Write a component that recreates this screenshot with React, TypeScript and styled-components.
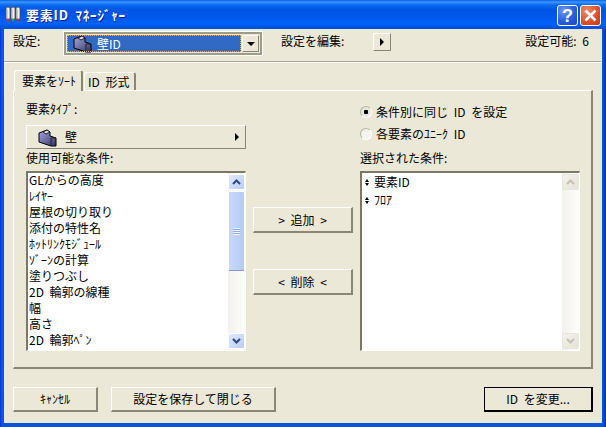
import * as React from 'react';
import styled, { createGlobalStyle } from 'styled-components';

const FACE = '#ebe8d8';
const FONT = `"Noto Sans CJK JP", "DejaVu Sans", sans-serif`;

const GlobalStyle = createGlobalStyle`
    html, body {
        margin: 0;
        padding: 0;
        background: #0a3ad0;
    }
    body {
        font-family: ${FONT};
        font-size: 12px;
        line-height: 16px;
        word-spacing: 3px;
        color: #000;
    }
`;

const Win = styled.div`
    width: 606px;
    height: 427px;
    box-sizing: border-box;
    display: flex;
    flex-direction: column;
    background: linear-gradient(90deg, #0831d9 0, #0a5be6 2px, #0855dd 4px, #0855dd 602px, #0a4ad0 604px, #0428a8 606px);
    overflow: hidden;
`;

const TitleBar = styled.div`
    height: 29px;
    flex: none;
    display: flex;
    align-items: center;
    padding: 0 5px 0 5px;
    gap: 5px;
    background: linear-gradient(180deg, #0a5fe8 0, #3d95ff 2px, #0a6af0 5px, #0054e3 10px, #0058ee 18px, #0062f8 24px, #0050d8 28px);
`;

const TitleText = styled.div`
    flex: 1;
    color: #fff;
    font-weight: 700;
    font-size: 13px;
    letter-spacing: 0.8px;
    text-shadow: 1px 1px 0 #0f1f8f;
`;

const CaptionButton = styled.div<{ $close?: boolean }>`
    width: 21px;
    height: 21px;
    box-sizing: border-box;
    margin-top: 2px;
    margin-left: -3px;
    border: 1px solid #fff;
    border-radius: 3px;
    display: flex;
    align-items: center;
    justify-content: center;
    background: ${p => p.$close
        ? 'radial-gradient(circle at 30% 25%, #ee8a6a, #e0512a 55%, #c23a14)'
        : 'radial-gradient(circle at 30% 25%, #6f97f0, #2a5fdc 55%, #1c46c0)'};
`;

const HelpMark = styled.span`
    color: #fff;
    font: 700 18px/18px "Liberation Sans", sans-serif;
`;

const Client = styled.div`
    flex: 1;
    margin: 0 4px 4px 4px;
    background: ${FACE};
    display: flex;
    flex-direction: column;
`;

const TopRow = styled.div`
    height: 33px;
    flex: none;
    box-sizing: border-box;
    margin-right: 1px;
    padding: 2px 12px 0 9px;
    display: flex;
    align-items: flex-start;
    border-bottom: 1px solid #aca899;
    box-shadow: 0 1px 0 #fff;
`;

const TopLabel = styled.div<{ $width?: number; $push?: boolean }>`
    margin-top: 2px;
    width: ${p => (p.$width ? `${p.$width}px` : 'auto')};
    margin-left: ${p => (p.$push ? 'auto' : '0')};
    white-space: nowrap;
`;

const Combo = styled.div`
    width: 200px;
    height: 25px;
    box-sizing: border-box;
    flex: none;
    margin-right: 18px;
    border: 1px solid #fff;
    box-shadow: inset 0 0 0 2px #a09c8c;
    padding: 3px;
    display: flex;
`;

const ComboValue = styled.div`
    flex: 1;
    background: #316ac5;
    outline: 1px dotted #e8b050;
    outline-offset: -1px;
    color: #fff;
    display: flex;
    align-items: center;
    gap: 5px;
    padding-left: 6px;
`;

const ComboArrow = styled.div`
    width: 17px;
    margin-left: 1px;
    background: ${FACE};
    border: 1px solid;
    border-color: #fff #8a8676 #8a8676 #fff;
    box-sizing: border-box;
    display: flex;
    align-items: center;
    justify-content: center;
`;

const Down = styled.span`
    width: 0;
    height: 0;
    border-left: 4px solid transparent;
    border-right: 4px solid transparent;
    border-top: 4px solid #000;
`;

const Right = styled.span`
    width: 0;
    height: 0;
    border-top: 4px solid transparent;
    border-bottom: 4px solid transparent;
    border-left: 4px solid #000;
`;

const SmallButton = styled.div`
    width: 18px;
    height: 18px;
    box-sizing: border-box;
    margin-top: 2px;
    border: 1px solid;
    border-color: #fff #8a8676 #8a8676 #fff;
    display: flex;
    align-items: center;
    justify-content: center;
`;

const Tabs = styled.div`
    margin: 8px 9px 0 9px;
    flex: none;
    display: flex;
    align-items: flex-end;
    height: 20px;
    position: relative;
    z-index: 1;
`;

const Tab = styled.div<{ $active?: boolean }>`
    box-sizing: border-box;
    height: ${p => (p.$active ? 21 : 18)}px;
    margin-bottom: ${p => (p.$active ? -1 : 0)}px;
    width: ${p => (p.$active ? 69 : 52)}px;
    margin-left: 1px;
    padding-left: ${p => (p.$active ? 7 : 3)}px;
    background: ${FACE};
    border: 1px solid;
    border-bottom: 0;
    border-color: #fff #8a8676 #fff #fff;
    border-right-width: 2px;
    border-radius: 3px 3px 0 0;
    line-height: ${p => (p.$active ? 19 : 17)}px;
    white-space: nowrap;
`;

const Panel = styled.div`
    margin: 0 9px 0 9px;
    height: 279px;
    flex: none;
    box-sizing: border-box;
    border: 1px solid;
    border-color: #fff #8a8676 #8a8676 #fff;
    border-bottom-width: 2px;
    border-right-width: 2px;
    padding: 10px 12px 0 12px;
    display: grid;
    grid-template-columns: 220px 100px 220px;
    column-gap: 7px;
    grid-template-rows: 48px 1fr;
`;

const Column = styled.div`
    display: flex;
    flex-direction: column;
`;

const TypeButton = styled.div`
    margin-top: 8px;
    height: 24px;
    box-sizing: border-box;
    border: 1px solid;
    border-color: #fff #8a8676 #8a8676 #fff;
    display: flex;
    align-items: center;
    padding: 0 6px 0 11px;
    gap: 8px;
`;

const Grow = styled.div`
    flex: 1;
`;

const RadioGroup = styled.div`
    display: flex;
    flex-direction: column;
    gap: 6px;
    padding-top: 3px;
`;

const RadioRow = styled.div`
    display: flex;
    align-items: center;
    gap: 4px;
    height: 16px;
    white-space: nowrap;
`;

const Radio = styled.span<{ $checked?: boolean }>`
    width: 12px;
    height: 12px;
    box-sizing: border-box;
    border-radius: 50%;
    background: ${p => (p.$checked
        ? 'radial-gradient(circle, #000 0 2px, #e8e6dc 2.5px)'
        : '#f4f3ec')};
    border: 1px solid #b5b2a2;
    border-right-color: #fff;
    border-bottom-color: #fff;
`;

const ListLabel = styled.div`
    margin-top: 1px;
    height: 16px;
`;

const ListBox = styled.div`
    margin-top: 5px;
    height: 180px;
    box-sizing: border-box;
    background: #fff;
    border: 1px solid;
    border-color: #7b7868 #fff #fff #7b7868;
    border-top-width: 2px;
    border-left-width: 2px;
    display: flex;
`;

const ListItems = styled.div`
    flex: 1;
    padding-left: 1px;
`;

const ListItem = styled.div`
    height: 16px;
    line-height: 14px;
    white-space: nowrap;
`;

const OrderItem = styled(ListItem)`
    height: 18px;
    padding-left: 2px;
    display: flex;
    align-items: center;
    gap: 4px;
`;

const OrderMark = styled.span`
    display: flex;
    flex-direction: column;
    gap: 1px;
    width: 5px;
    &::before, &::after {
        content: '';
        width: 0;
        height: 0;
        border-left: 2.5px solid transparent;
        border-right: 2.5px solid transparent;
    }
    &::before {
        border-bottom: 3px solid #000;
    }
    &::after {
        border-top: 3px solid #000;
    }
`;

const ScrollBar = styled.div`
    width: 17px;
    flex: none;
    background: linear-gradient(90deg, #f3f1ec, #fdfdfa);
    display: flex;
    flex-direction: column;
    justify-content: space-between;
    padding: 1px 0;
    box-sizing: border-box;
`;

const ScrollArrow = styled.div<{ $disabled?: boolean }>`
    height: 16px;
    box-sizing: border-box;
    flex: none;
    border: 1px solid ${p => (p.$disabled ? '#e8e6dc' : '#fff')};
    border-radius: 2px;
    background: ${p => (p.$disabled
        ? 'linear-gradient(135deg, #f4f3ec, #e6e3d4)'
        : 'linear-gradient(135deg, #e0eafc, #b8cdf8)')};
    display: flex;
    align-items: center;
    justify-content: center;
`;

const Thumb = styled.div`
    height: 80px;
    margin-top: 1px;
    flex: none;
    box-sizing: border-box;
    border: 1px solid #fff;
    border-bottom-color: #7f9be0;
    border-radius: 2px;
    background: linear-gradient(90deg, #c8d8fb, #b6cbf8);
    display: flex;
    align-items: center;
    justify-content: center;
`;

const Grip = styled.span`
    width: 7px;
    height: 7px;
    background: repeating-linear-gradient(180deg, #f0f4fe 0 1px, #8eaaf0 1px 2px);
`;

const ThumbTrack = styled.div`
    flex: 1;
`;

const Middle = styled.div`
    display: flex;
    flex-direction: column;
    gap: 36px;
    padding-top: 58px;
`;

const PushButton = styled.div<{ $width?: number; $default?: boolean }>`
    box-sizing: border-box;
    height: ${p => (p.$width ? 25 : 26)}px;
    width: ${p => (p.$width ? `${p.$width}px` : '100%')};
    border: 1px solid;
    border-color: ${p => (p.$default ? '#000' : '#fff #8a8676 #8a8676 #fff')};
    border-bottom-width: 2px;
    border-right-width: 2px;
    display: flex;
    align-items: center;
    justify-content: center;
    white-space: pre;
`;

const Footer = styled.div`
    flex: 1;
    margin-top: 18px;
    padding: 0 9px 11px 9px;
    display: flex;
    gap: 13px;
    align-items: flex-start;
`;

const Spacer = styled.div`
    flex: 1;
`;

const WallIcon = () => (
    <svg width="19" height="19" viewBox="0 0 19 19">
        <defs>
            <linearGradient id="wallFace" x1="0" y1="0" x2="1" y2="1">
                <stop offset="0" stopColor="#a9a9e6" />
                <stop offset="1" stopColor="#34345e" />
            </linearGradient>
        </defs>
        <path d="M1 5 L9 2 L12 4 L12 8 L18 10 L18 18 L13 18 L1 14 Z" fill="url(#wallFace)" stroke="#000" strokeWidth="1" />
        <path d="M5 4 L9 2 L12 4 L8 6 Z" fill="#d8d8e8" stroke="#000" strokeWidth="0.8" />
        <path d="M13 18 L13 10 L18 10" fill="none" stroke="#222" strokeWidth="1" />
    </svg>
);

const Pencil = ({ x, tip }: { x: number; tip: string }) => (
    <g>
        <path d={`M${x} 2 q2 -2 4 0 v11 h-4 Z`} fill="#f6f4ea" stroke="#4a4a58" strokeWidth="0.8" />
        <path d={`M${x + 1} 3 v9`} stroke="#a8a8a0" strokeWidth="1" />
        <path d={`M${x} 13 h4 l-2 3 Z`} fill={tip} />
    </g>
);

const TitleIcon = () => (
    <svg width="16" height="17" viewBox="0 0 16 17">
        <Pencil x={1} tip="#d03030" />
        <Pencil x={6} tip="#30a040" />
        <Pencil x={11} tip="#d03030" />
    </svg>
);

const Chevron = ({ up, color }: { up?: boolean; color: string }) => (
    <svg width="9" height="6" viewBox="0 0 9 6">
        <path d={up ? 'M1 5 L4.5 1.5 L8 5' : 'M1 1 L4.5 4.5 L8 1'} fill="none" stroke={color} strokeWidth="2" />
    </svg>
);

const CloseMark = () => (
    <svg width="13" height="13" viewBox="0 0 13 13">
        <path d="M1.5 1.5 L11.5 11.5 M11.5 1.5 L1.5 11.5" stroke="#fff" strokeWidth="2.6" />
    </svg>
);

const availableItems = [
    'GLからの高度',
    'ﾚｲﾔｰ',
    '屋根の切り取り',
    '添付の特性名',
    'ﾎｯﾄﾘﾝｸﾓｼﾞｭｰﾙ',
    'ｿﾞｰﾝの計算',
    '塗りつぶし',
    '2D 輪郭の線種',
    '幅',
    '高さ',
    '2D 輪郭ﾍﾟﾝ',
];

const selectedItems = ['要素ID', 'ﾌﾛｱ'];

export default function App() {
    return (
        <Win>
            <GlobalStyle />
            <TitleBar>
                <TitleIcon />
                <TitleText>要素ID ﾏﾈｰｼﾞｬｰ</TitleText>
                <CaptionButton><HelpMark>?</HelpMark></CaptionButton>
                <CaptionButton $close><CloseMark /></CaptionButton>
            </TitleBar>
            <Client>
                <TopRow>
                    <TopLabel $width={50}>設定:</TopLabel>
                    <Combo>
                        <ComboValue><WallIcon />壁ID</ComboValue>
                        <ComboArrow><Down /></ComboArrow>
                    </Combo>
                    <TopLabel $width={92}>設定を編集:</TopLabel>
                    <SmallButton><Right /></SmallButton>
                    <TopLabel $push>設定可能: 6</TopLabel>
                </TopRow>
                <Tabs>
                    <Tab $active>要素をｿｰﾄ</Tab>
                    <Tab>ID 形式</Tab>
                </Tabs>
                <Panel>
                    <Column>
                        <div>要素ﾀｲﾌﾟ:</div>
                        <TypeButton><WallIcon />壁<Grow /><Right /></TypeButton>
                    </Column>
                    <div />
                    <RadioGroup>
                        <RadioRow><Radio $checked />条件別に同じ ID を設定</RadioRow>
                        <RadioRow><Radio />各要素のﾕﾆｰｸ ID</RadioRow>
                    </RadioGroup>
                    <Column>
                        <ListLabel>使用可能な条件:</ListLabel>
                        <ListBox>
                            <ListItems>
                                {availableItems.map(item => <ListItem key={item}>{item}</ListItem>)}
                            </ListItems>
                            <ScrollBar>
                                <ScrollArrow><Chevron up color="#2f4a80" /></ScrollArrow>
                                <Thumb><Grip /></Thumb>
                                <ThumbTrack />
                                <ScrollArrow><Chevron color="#2f4a80" /></ScrollArrow>
                            </ScrollBar>
                        </ListBox>
                    </Column>
                    <Middle>
                        <PushButton>{'> 追加 >'}</PushButton>
                        <PushButton>{'< 削除 <'}</PushButton>
                    </Middle>
                    <Column>
                        <ListLabel>選択された条件:</ListLabel>
                        <ListBox>
                            <ListItems>
                                {selectedItems.map(item => (
                                    <OrderItem key={item}><OrderMark />{item}</OrderItem>
                                ))}
                            </ListItems>
                            <ScrollBar>
                                <ScrollArrow $disabled><Chevron up color="#c4c2b4" /></ScrollArrow>
                                <ScrollArrow $disabled><Chevron color="#c4c2b4" /></ScrollArrow>
                            </ScrollBar>
                        </ListBox>
                    </Column>
                </Panel>
                <Footer>
                    <PushButton $width={85}>ｷｬﾝｾﾙ</PushButton>
                    <PushButton $width={165}>設定を保存して閉じる</PushButton>
                    <Spacer />
                    <PushButton $width={109} $default>ID を変更...</PushButton>
                </Footer>
            </Client>
        </Win>
    );
}
